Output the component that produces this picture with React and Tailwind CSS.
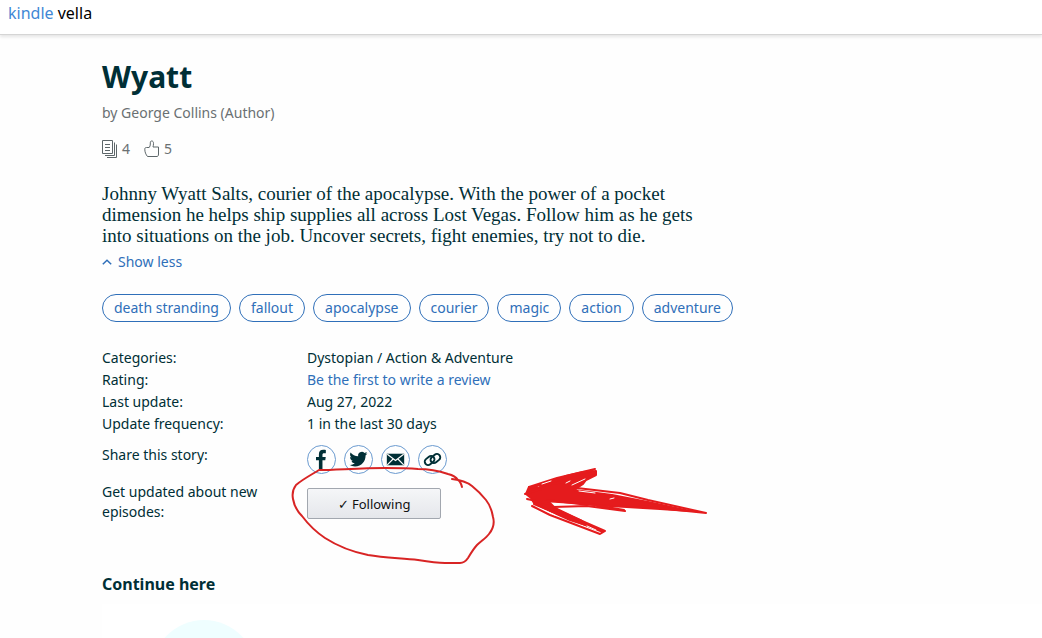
import React from "react";

const tags = ["death stranding", "fallout", "apocalypse", "courier", "magic", "action", "adventure"];

const details = [
  ["Categories:", "Dystopian / Action & Adventure"],
  ["Rating:", "Be the first to write a review"],
  ["Last update:", "Aug 27, 2022"],
  ["Update frequency:", "1 in the last 30 days"],
];

function EpisodesIcon() {
  return (
    <svg width="16" height="18" viewBox="0 0 16 18" fill="none" stroke="#5d6669" aria-hidden="true">
      <path d="M.5.5h10v13H.5z M12.500 2.500v13H3 M14.500 4.500v13H5" />
      <path d="M3 4.500h5M3 7.500h5M3 10.500h5" />
    </svg>
  );
}

function ThumbIcon() {
  return (
    <svg width="16" height="18" viewBox="0 0 16 18" fill="none" stroke="#5d6669" strokeLinejoin="round" aria-hidden="true">
      <path d="M3.500 16.500C1.800 14.500.8 12 .8 9.200c0-1.300.6-1.700 1.700-1.700h2.700C6 6.500 6.300 5.500 6.300 4V2.800C6.300 1.500 6.900 1 7.700 1 9 1 9.500 2 9.500 3.300c0 1.300-.2 2.700-.5 3.700h5.500v7c0 1.500-.5 2.500-1.500 2.500z" />
    </svg>
  );
}

const shares = [
  {
    label: "Share on Facebook",
    art: <path d="M12.300 25v-9.200H9.300v-3.400h3V9.600C12.300 6.400 14 5 16.800 5c1.300 0 2.200.1 2.700.2v3.200h-1.800c-1.300 0-1.700.7-1.700 1.700v2.300h3.400l-.5 3.400H16V25z" />,
  },
  {
    label: "Share on Twitter",
    art: (
      <path
        transform="translate(5.500 5.300) scale(.78)"
        d="M23.950 4.570a10 10 0 01-2.820.77 4.960 4.960 0 002.160-2.720c-.95.550-2 .95-3.130 1.180a4.920 4.920 0 00-8.380 4.480C7.690 8.100 4.070 6.130 1.640 3.160a4.820 4.820 0 00-.67 2.480c0 1.710.87 3.210 2.190 4.100a4.900 4.900 0 01-2.230-.62v.06a4.920 4.920 0 003.950 4.830 5 5 0 01-2.210.08 4.940 4.940 0 004.600 3.420A9.870 9.870 0 010 19.540a13.990 13.990 0 007.550 2.210c9.050 0 14-7.500 14-13.980 0-.21 0-.42-.02-.63a9.940 9.940 0 002.460-2.550z"
      />
    ),
  },
  {
    label: "Share by email",
    art: (
      <g>
        <path d="M6 9h18v12H6z" />
        <path d="M6.500 9.500L15 16l8.500-6.500M6.500 20.500l6-6M23.500 20.500l-6-6" fill="none" stroke="#fefefe" strokeWidth="1.200" />
      </g>
    ),
  },
  {
    label: "Copy link",
    art: (
      <g fill="none" stroke="#002f36" strokeWidth="2">
        <rect x="6.500" y="12.500" width="11" height="7" rx="3.500" transform="rotate(-40 12 16)" />
        <rect x="12.500" y="10.500" width="11" height="7" rx="3.500" transform="rotate(-40 18 14)" />
      </g>
    ),
  },
];

function Annotation() {
  return (
    <svg className="pointer-events-none overflow-visible" width="416" height="100" viewBox="291 464 416 100" fill="none" stroke="#d82424" strokeLinecap="round" strokeLinejoin="round" aria-hidden="true">
      <path strokeWidth="2" d="M462 486C461 482 460 480 458 479C456 476 452 474 448 473C439 470 429 468 418 468C407 467 396 467 385 467C360 467 335 469 319 469C311 474 303 478 296 484C293 488 292 493 293 498C294 504 297 510 302 515C308 523 316 531 325 537C339 546 353 551 368 554C385 557 402 557 418 559C430 561 438 562 445 562H460C464 562 466 560 468 557C471 552 474 547 477 544C481 540 486 537 489 533C493 528 495 523 493 516C492 510 490 504 486 499C482 494 477 489 472 485C467 481 461 479 452 478" />
      <g stroke="#e51b1d" fill="#e51b1d">
        <path strokeWidth="2" d="M526 493L529 486L539 487L566 475L583 471L596 470L596 474L586 479L583 483L574 489L612 494L648 501L690 510L660 508L643 507L610 505L580 503L547 499L555 507L582 520L592 526L570 519L548 509L534 502L531 497Z" />
        <g strokeWidth="2" fill="none">
          <path d="M525 493L541 488M529 486L557 477L595 468M530 487L561 478L593 469M540 485L563 481L596 471M577 487L620 492L648 499L706 512L677 509L640 505M527 498L550 503M532 505L550 514L600 533L605 530L582 520L555 508M534 503L558 513L603 531M553 506L587 505L625 510M543 500L590 503L624 509" />
        </g>
      </g>
      <path stroke="#fefefe" strokeWidth="1" d="M579 490L595 492M610 498L614 497M542 483L551 480M572 484L585 478M566 482L570 480M546 510L555 514M587 525L596 529" />
    </svg>
  );
}

export default function App() {
  return (
    <div className="min-h-screen overflow-x-hidden bg-[#fefefe] font-['Noto_Sans',sans-serif] text-sm text-[#002f36]">
      <header className="flex h-[35px] items-start border-b border-[#d5d5d5] bg-white px-2 pt-[3px] text-base leading-5 shadow-[0_2px_3px_#e5e5e5]">
        <a href="#home" className="text-black"><span className="text-[#3f88d5]">kindle</span> vella</a>
      </header>
      <main className="pl-[102px] pt-6">
        <h1 className="text-3xl leading-9 font-bold">Wyatt</h1>
        <p className="mt-2 leading-5 text-[#6a7072]">by George Collins (Author)</p>
        <div className="mt-4 flex h-5 items-center gap-3.5 text-[#6a7072]">
          <span className="flex items-center gap-1"><EpisodesIcon />4</span>
          <span className="flex items-center gap-1"><ThumbIcon />5</span>
        </div>
        <p className="mt-6 max-w-[600px] font-['Liberation_Serif',serif] text-[19px] leading-[21px]">
          Johnny Wyatt Salts, courier of the apocalypse. With the power of a pocket dimension he helps ship supplies all across Lost Vegas. Follow him as he gets into situations on the job. Uncover secrets, fight enemies, try not to die.
        </p>
        <button type="button" className="mt-1 flex h-6 items-center gap-1.5 text-[#2f6fb9]">
          <svg width="10" height="6" viewBox="0 0 10 6" fill="none" stroke="currentColor" strokeWidth="1.500" aria-hidden="true"><path d="M.8 5.200L5 1.200l4.200 4" /></svg>
          Show less
        </button>
        <ul className="mt-5 flex flex-wrap gap-2">
          {tags.map((t) => (
            <li key={t}><a href="#tag" className="flex h-7 items-center rounded-full border border-[#2f6fb9] px-[11px] text-[#2f6fb9]">{t}</a></li>
          ))}
        </ul>
        <dl className="mt-[25px] grid grid-cols-[205px_1fr] leading-[22px]">
          {details.map(([k, v]) => (
            <React.Fragment key={k}>
              <dt>{k}</dt>
              <dd>{k === "Rating:" ? <a href="#review" className="text-[#2f6fb9]">{v}</a> : v}</dd>
            </React.Fragment>
          ))}
        </dl>
        <div className="relative mt-2.5 grid grid-cols-[205px_1fr] gap-y-2 leading-5">
          <span>Share this story:</span>
          <div className="flex gap-2">
            {shares.map((s) => (
              <button key={s.label} type="button" aria-label={s.label} className="size-[29px] rounded-full border border-[#6b9bd0]">
                <svg width="27" height="27" viewBox="1 1 28 28" fill="#002f36" aria-hidden="true">{s.art}</svg>
              </button>
            ))}
          </div>
          <span className="max-w-[180px]">Get updated about new episodes:</span>
          <div className="pt-1.5">
            <button type="button" className="h-[31px] w-[134px] rounded-xs border border-[#a2a7af] bg-linear-to-b from-[#f5f6f8] to-[#e5e7eb] text-[13px] text-[#111]">✓ Following</button>
          </div>
          <div className="pointer-events-none absolute top-5 left-[189px]"><Annotation /></div>
        </div>
        <h2 className="mt-[50px] text-base leading-6 font-bold">Continue here</h2>
        <section className="mt-2 h-9 overflow-hidden bg-white pl-[50px] pt-4" aria-label="Next episode">
          <div className="size-[104px] rounded-full bg-[#effeff]" />
        </section>
      </main>
    </div>
  );
}
